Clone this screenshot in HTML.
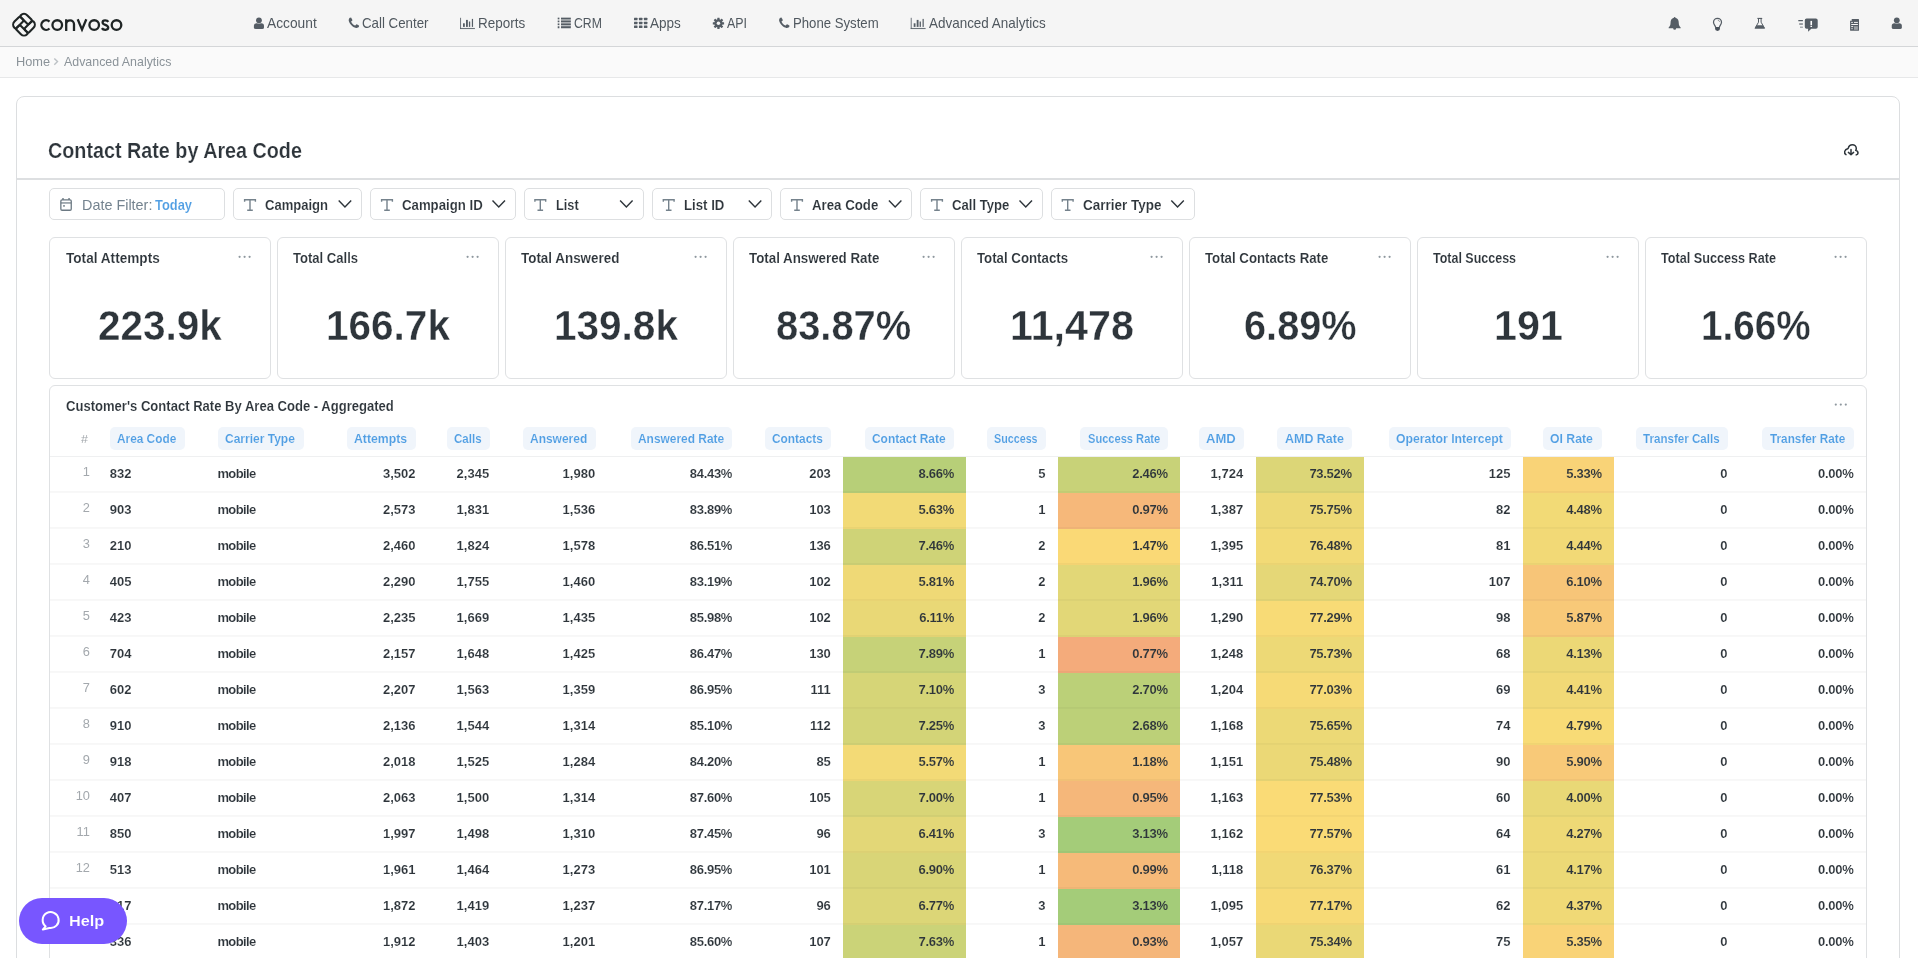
<!DOCTYPE html>
<html><head><meta charset="utf-8"><title>Advanced Analytics</title>
<style>
html,body{margin:0;padding:0;}
body{width:1918px;height:958px;overflow:hidden;background:#fff;font-family:"Liberation Sans",sans-serif;position:relative;}
#root{position:absolute;left:0;top:0;width:1918px;height:958px;overflow:hidden;will-change:transform;}
.t{position:absolute;white-space:pre;line-height:1;font-family:"Liberation Sans",sans-serif;transform-origin:0 0;}
.z{z-index:20}
#nav{position:absolute;left:0;top:0;width:1918px;height:46px;background:#f5f5f5;border-bottom:1px solid #d4d6d8;box-shadow:0 1px 2px rgba(0,0,0,0.08);}
#bc{position:absolute;left:0;top:47px;width:1918px;height:30px;background:#fafafa;border-bottom:1px solid #e7e8e9;}
#card{position:absolute;left:16px;top:96px;width:1882px;height:900px;border:1px solid #dcdee0;border-radius:8px;background:#fff;box-sizing:content-box;}
#hdrline{position:absolute;left:17px;top:178px;width:1882px;height:2px;background:#dddfe1;}
.fb{position:absolute;top:188px;height:30px;border:1px solid #dddfe1;border-radius:5px;background:#fff;box-sizing:content-box;}
.kc{position:absolute;top:237px;width:220px;height:140px;border:1px solid #dfe1e3;border-radius:6px;background:#fff;box-sizing:content-box;}
#tc{position:absolute;left:49px;top:385px;width:1816px;height:600px;border:1px solid #dfe1e3;border-radius:6px;background:#fff;box-sizing:content-box;}
.chip{position:absolute;top:427px;height:22.5px;border-radius:5px;background:#f0f5fb;}
.cc{position:absolute;height:36px;}
.rb{position:absolute;left:50px;width:1816px;height:1px;background:rgba(20,30,40,0.065);}
#help{position:absolute;left:19px;top:898px;width:108px;height:46px;border-radius:23px;background:#7856ff;z-index:10;}
svg{position:absolute;overflow:visible;}
</style></head><body><div id="root">
<div id="nav"></div><div id="bc"></div>
<div id="card"></div><div id="hdrline"></div>
<div id="tc"></div>
<div class="fb" style="left:49px;width:174px"></div><div class="fb" style="left:233px;width:127.30000000000001px"></div><div class="fb" style="left:370px;width:144px"></div><div class="fb" style="left:523.7px;width:118.79999999999995px"></div><div class="fb" style="left:652.3px;width:118.0px"></div><div class="fb" style="left:780.3px;width:129.70000000000005px"></div><div class="fb" style="left:920px;width:121px"></div><div class="fb" style="left:1051px;width:142px"></div><div class="kc" style="left:49px"></div><div class="kc" style="left:277px"></div><div class="kc" style="left:505px"></div><div class="kc" style="left:733px"></div><div class="kc" style="left:961px"></div><div class="kc" style="left:1189px"></div><div class="kc" style="left:1417px"></div><div class="kc" style="left:1645px"></div><div class="chip" style="left:109.8px;width:75.4px"></div><div class="chip" style="left:217.5px;width:86.50000000000003px"></div><div class="chip" style="left:346.5px;width:69.50000000000003px"></div><div class="chip" style="left:446.5px;width:43.20000000000001px"></div><div class="chip" style="left:522.5px;width:73.19999999999996px"></div><div class="chip" style="left:630.5px;width:101.9px"></div><div class="chip" style="left:764.8px;width:66.60000000000005px"></div><div class="chip" style="left:864.8px;width:89.4px"></div><div class="chip" style="left:986.5px;width:59.49999999999991px"></div><div class="chip" style="left:1079.5px;width:88.49999999999991px"></div><div class="chip" style="left:1198.5px;width:45.19999999999995px"></div><div class="chip" style="left:1276.5px;width:75.49999999999991px"></div><div class="chip" style="left:1388.8px;width:122.19999999999996px"></div><div class="chip" style="left:1542.8px;width:59.19999999999995px"></div><div class="chip" style="left:1635.5px;width:92.49999999999991px"></div><div class="chip" style="left:1762.1px;width:91.60000000000005px"></div>
<div class="cc" style="left:843px;top:457px;width:123px;background:rgb(183,207,120)"></div><div class="cc" style="left:1058px;top:457px;width:122px;background:rgb(200,210,120)"></div><div class="cc" style="left:1256px;top:457px;width:108px;background:rgb(220,214,119)"></div><div class="cc" style="left:1523px;top:457px;width:91px;background:rgb(249,211,119)"></div><div class="cc" style="left:843px;top:493px;width:123px;background:rgb(242,218,118)"></div><div class="cc" style="left:1058px;top:493px;width:122px;background:rgb(246,184,122)"></div><div class="cc" style="left:1256px;top:493px;width:108px;background:rgb(237,217,118)"></div><div class="cc" style="left:1523px;top:493px;width:91px;background:rgb(242,218,118)"></div><div class="cc" style="left:843px;top:529px;width:123px;background:rgb(207,211,119)"></div><div class="cc" style="left:1058px;top:529px;width:122px;background:rgb(250,217,118)"></div><div class="cc" style="left:1256px;top:529px;width:108px;background:rgb(242,218,118)"></div><div class="cc" style="left:1523px;top:529px;width:91px;background:rgb(242,217,118)"></div><div class="cc" style="left:843px;top:565px;width:123px;background:rgb(239,217,118)"></div><div class="cc" style="left:1058px;top:565px;width:122px;background:rgb(226,215,119)"></div><div class="cc" style="left:1256px;top:565px;width:108px;background:rgb(229,215,119)"></div><div class="cc" style="left:1523px;top:565px;width:91px;background:rgb(247,197,120)"></div><div class="cc" style="left:843px;top:601px;width:123px;background:rgb(233,216,118)"></div><div class="cc" style="left:1058px;top:601px;width:122px;background:rgb(226,215,119)"></div><div class="cc" style="left:1256px;top:601px;width:108px;background:rgb(248,219,118)"></div><div class="cc" style="left:1523px;top:601px;width:91px;background:rgb(248,201,120)"></div><div class="cc" style="left:843px;top:637px;width:123px;background:rgb(198,210,120)"></div><div class="cc" style="left:1058px;top:637px;width:122px;background:rgb(244,171,123)"></div><div class="cc" style="left:1256px;top:637px;width:108px;background:rgb(237,217,118)"></div><div class="cc" style="left:1523px;top:637px;width:91px;background:rgb(236,216,118)"></div><div class="cc" style="left:843px;top:673px;width:123px;background:rgb(214,213,119)"></div><div class="cc" style="left:1058px;top:673px;width:122px;background:rgb(187,208,120)"></div><div class="cc" style="left:1256px;top:673px;width:108px;background:rgb(246,218,118)"></div><div class="cc" style="left:1523px;top:673px;width:91px;background:rgb(241,217,118)"></div><div class="cc" style="left:843px;top:709px;width:123px;background:rgb(211,212,119)"></div><div class="cc" style="left:1058px;top:709px;width:122px;background:rgb(188,208,120)"></div><div class="cc" style="left:1256px;top:709px;width:108px;background:rgb(236,217,118)"></div><div class="cc" style="left:1523px;top:709px;width:91px;background:rgb(248,219,118)"></div><div class="cc" style="left:843px;top:745px;width:123px;background:rgb(243,218,118)"></div><div class="cc" style="left:1058px;top:745px;width:122px;background:rgb(248,198,120)"></div><div class="cc" style="left:1256px;top:745px;width:108px;background:rgb(235,216,118)"></div><div class="cc" style="left:1523px;top:745px;width:91px;background:rgb(248,201,120)"></div><div class="cc" style="left:843px;top:781px;width:123px;background:rgb(216,213,119)"></div><div class="cc" style="left:1058px;top:781px;width:122px;background:rgb(245,183,122)"></div><div class="cc" style="left:1256px;top:781px;width:108px;background:rgb(250,219,118)"></div><div class="cc" style="left:1523px;top:781px;width:91px;background:rgb(233,216,118)"></div><div class="cc" style="left:843px;top:817px;width:123px;background:rgb(227,215,119)"></div><div class="cc" style="left:1058px;top:817px;width:122px;background:rgb(164,204,121)"></div><div class="cc" style="left:1256px;top:817px;width:108px;background:rgb(250,219,118)"></div><div class="cc" style="left:1523px;top:817px;width:91px;background:rgb(238,217,118)"></div><div class="cc" style="left:843px;top:853px;width:123px;background:rgb(217,213,119)"></div><div class="cc" style="left:1058px;top:853px;width:122px;background:rgb(246,186,121)"></div><div class="cc" style="left:1256px;top:853px;width:108px;background:rgb(241,217,118)"></div><div class="cc" style="left:1523px;top:853px;width:91px;background:rgb(236,217,118)"></div><div class="cc" style="left:843px;top:889px;width:123px;background:rgb(220,214,119)"></div><div class="cc" style="left:1058px;top:889px;width:122px;background:rgb(164,204,121)"></div><div class="cc" style="left:1256px;top:889px;width:108px;background:rgb(247,218,118)"></div><div class="cc" style="left:1523px;top:889px;width:91px;background:rgb(240,217,118)"></div><div class="cc" style="left:843px;top:925px;width:123px;background:rgb(203,211,120)"></div><div class="cc" style="left:1058px;top:925px;width:122px;background:rgb(245,182,122)"></div><div class="cc" style="left:1256px;top:925px;width:108px;background:rgb(234,216,118)"></div><div class="cc" style="left:1523px;top:925px;width:91px;background:rgb(249,211,119)"></div>
<div class="rb" style="top:456px"></div><div class="rb" style="top:491px;opacity:.5"></div><div class="rb" style="top:492px;opacity:.45"></div><div class="rb" style="top:527px;opacity:.5"></div><div class="rb" style="top:528px;opacity:.45"></div><div class="rb" style="top:563px;opacity:.5"></div><div class="rb" style="top:564px;opacity:.45"></div><div class="rb" style="top:599px;opacity:.5"></div><div class="rb" style="top:600px;opacity:.45"></div><div class="rb" style="top:635px;opacity:.5"></div><div class="rb" style="top:636px;opacity:.45"></div><div class="rb" style="top:671px;opacity:.5"></div><div class="rb" style="top:672px;opacity:.45"></div><div class="rb" style="top:707px;opacity:.5"></div><div class="rb" style="top:708px;opacity:.45"></div><div class="rb" style="top:743px;opacity:.5"></div><div class="rb" style="top:744px;opacity:.45"></div><div class="rb" style="top:779px;opacity:.5"></div><div class="rb" style="top:780px;opacity:.45"></div><div class="rb" style="top:815px;opacity:.5"></div><div class="rb" style="top:816px;opacity:.45"></div><div class="rb" style="top:851px;opacity:.5"></div><div class="rb" style="top:852px;opacity:.45"></div><div class="rb" style="top:887px;opacity:.5"></div><div class="rb" style="top:888px;opacity:.45"></div><div class="rb" style="top:923px;opacity:.5"></div><div class="rb" style="top:924px;opacity:.45"></div><div class="rb" style="top:959px;opacity:.5"></div><div class="rb" style="top:960px;opacity:.45"></div>
<div id="help"></div>
<span class="t" style="top:15.93px;font-size:14.5px;font-weight:400;color:#50585f;transform:scaleX(0.9496);left:267.13px;">Account</span><span class="t" style="top:15.93px;font-size:14.5px;font-weight:400;color:#50585f;transform:scaleX(0.9171);left:361.90px;">Call Center</span><span class="t" style="top:15.93px;font-size:14.5px;font-weight:400;color:#50585f;transform:scaleX(0.9288);left:478.49px;">Reports</span><span class="t" style="top:15.93px;font-size:14.5px;font-weight:400;color:#50585f;transform:scaleX(0.8451);left:574.05px;">CRM</span><span class="t" style="top:15.93px;font-size:14.5px;font-weight:400;color:#50585f;transform:scaleX(0.9335);left:649.79px;">Apps</span><span class="t" style="top:15.93px;font-size:14.5px;font-weight:400;color:#50585f;transform:scaleX(0.8563);left:726.94px;">API</span><span class="t" style="top:15.93px;font-size:14.5px;font-weight:400;color:#50585f;transform:scaleX(0.9078);left:792.91px;">Phone System</span><span class="t" style="top:15.93px;font-size:14.5px;font-weight:400;color:#50585f;transform:scaleX(0.9274);left:928.79px;">Advanced Analytics</span><span class="t" style="top:54.57px;font-size:13.5px;font-weight:400;color:#8b9399;transform:scaleX(0.9467);left:15.67px;">Home</span><span class="t" style="top:54.57px;font-size:13.5px;font-weight:400;color:#8b9399;transform:scaleX(0.9177);left:64.44px;">Advanced Analytics</span><span class="t" style="top:139.58px;font-size:22px;font-weight:700;color:#2e353b;-webkit-text-stroke:0.20px #fff;transform:scaleX(0.8979);left:48.41px;">Contact Rate by Area Code</span><span class="t" style="top:198.24px;font-size:14.6px;font-weight:400;color:#74838f;transform:scaleX(0.9866);left:81.65px;">Date Filter:</span><span class="t" style="top:198.24px;font-size:14.6px;font-weight:700;color:#509ee3;-webkit-text-stroke:0.13px #fff;transform:scaleX(0.8834);left:154.62px;">Today</span><span class="t" style="top:198.24px;font-size:14.6px;font-weight:700;color:#2e353b;-webkit-text-stroke:0.13px #fff;transform:scaleX(0.8933);left:265.11px;">Campaign</span><span class="t" style="top:198.24px;font-size:14.6px;font-weight:700;color:#2e353b;-webkit-text-stroke:0.13px #fff;transform:scaleX(0.9049);left:401.71px;">Campaign ID</span><span class="t" style="top:198.24px;font-size:14.6px;font-weight:700;color:#2e353b;-webkit-text-stroke:0.13px #fff;transform:scaleX(0.8716);left:556.13px;">List</span><span class="t" style="top:198.24px;font-size:14.6px;font-weight:700;color:#2e353b;-webkit-text-stroke:0.13px #fff;transform:scaleX(0.9042);left:684.41px;">List ID</span><span class="t" style="top:198.24px;font-size:14.6px;font-weight:700;color:#2e353b;-webkit-text-stroke:0.13px #fff;transform:scaleX(0.9085);left:812.40px;">Area Code</span><span class="t" style="top:198.24px;font-size:14.6px;font-weight:700;color:#2e353b;-webkit-text-stroke:0.13px #fff;transform:scaleX(0.8983);left:952.11px;">Call Type</span><span class="t" style="top:198.24px;font-size:14.6px;font-weight:700;color:#2e353b;-webkit-text-stroke:0.13px #fff;transform:scaleX(0.9236);left:1082.69px;">Carrier Type</span><span class="t" style="top:250.10px;font-size:15px;font-weight:700;color:#2e353b;-webkit-text-stroke:0.13px #fff;transform:scaleX(0.9077);left:65.64px;">Total Attempts</span><span class="t" style="top:305.15px;font-size:42px;font-weight:700;color:#2e353b;-webkit-text-stroke:0.38px #fff;transform:scaleX(0.9640);left:98.08px;">223.9k</span><span class="t" style="top:250.10px;font-size:15px;font-weight:700;color:#2e353b;-webkit-text-stroke:0.13px #fff;transform:scaleX(0.8702);left:293.41px;">Total Calls</span><span class="t" style="top:305.15px;font-size:42px;font-weight:700;color:#2e353b;-webkit-text-stroke:0.38px #fff;transform:scaleX(0.9647);left:326.03px;">166.7k</span><span class="t" style="top:250.10px;font-size:15px;font-weight:700;color:#2e353b;-webkit-text-stroke:0.13px #fff;transform:scaleX(0.8938);left:521.10px;">Total Answered</span><span class="t" style="top:305.15px;font-size:42px;font-weight:700;color:#2e353b;-webkit-text-stroke:0.38px #fff;transform:scaleX(0.9647);left:554.03px;">139.8k</span><span class="t" style="top:250.10px;font-size:15px;font-weight:700;color:#2e353b;-webkit-text-stroke:0.13px #fff;transform:scaleX(0.8885);left:749.40px;">Total Answered Rate</span><span class="t" style="top:305.15px;font-size:42px;font-weight:700;color:#2e353b;-webkit-text-stroke:0.38px #fff;transform:scaleX(0.9494);left:776.38px;">83.87%</span><span class="t" style="top:250.10px;font-size:15px;font-weight:700;color:#2e353b;-webkit-text-stroke:0.13px #fff;transform:scaleX(0.8834);left:977.10px;">Total Contacts</span><span class="t" style="top:305.15px;font-size:42px;font-weight:700;color:#2e353b;-webkit-text-stroke:0.38px #fff;transform:scaleX(0.9824);left:1010.03px;">11,478</span><span class="t" style="top:250.10px;font-size:15px;font-weight:700;color:#2e353b;-webkit-text-stroke:0.13px #fff;transform:scaleX(0.8826);left:1205.10px;">Total Contacts Rate</span><span class="t" style="top:305.15px;font-size:42px;font-weight:700;color:#2e353b;-webkit-text-stroke:0.38px #fff;transform:scaleX(0.9458);left:1243.68px;">6.89%</span><span class="t" style="top:250.10px;font-size:15px;font-weight:700;color:#2e353b;-webkit-text-stroke:0.13px #fff;transform:scaleX(0.8325);left:1433.44px;">Total Success</span><span class="t" style="top:305.15px;font-size:42px;font-weight:700;color:#2e353b;-webkit-text-stroke:0.38px #fff;transform:scaleX(0.9838);left:1493.53px;">191</span><span class="t" style="top:250.10px;font-size:15px;font-weight:700;color:#2e353b;-webkit-text-stroke:0.13px #fff;transform:scaleX(0.8431);left:1661.13px;">Total Success Rate</span><span class="t" style="top:305.15px;font-size:42px;font-weight:700;color:#2e353b;-webkit-text-stroke:0.38px #fff;transform:scaleX(0.9206);left:1701.18px;">1.66%</span><span class="t" style="top:399.24px;font-size:14.6px;font-weight:700;color:#2e353b;-webkit-text-stroke:0.13px #fff;transform:scaleX(0.8945);left:65.91px;">Customer's Contact Rate By Area Code - Aggregated</span><span class="t" style="top:432.65px;font-size:12.7px;font-weight:700;color:#509ee3;-webkit-text-stroke:0.11px #f0f5fb;transform:scaleX(0.9334);left:117.22px;">Area Code</span><span class="t" style="top:432.65px;font-size:12.7px;font-weight:700;color:#509ee3;-webkit-text-stroke:0.11px #f0f5fb;transform:scaleX(0.9468);left:225.46px;">Carrier Type</span><span class="t" style="top:432.65px;font-size:12.7px;font-weight:700;color:#509ee3;-webkit-text-stroke:0.11px #f0f5fb;transform:scaleX(0.9673);left:354.15px;">Attempts</span><span class="t" style="top:432.65px;font-size:12.7px;font-weight:700;color:#509ee3;-webkit-text-stroke:0.11px #f0f5fb;transform:scaleX(0.9097);left:453.78px;">Calls</span><span class="t" style="top:432.65px;font-size:12.7px;font-weight:700;color:#509ee3;-webkit-text-stroke:0.11px #f0f5fb;transform:scaleX(0.9431);left:530.16px;">Answered</span><span class="t" style="top:432.65px;font-size:12.7px;font-weight:700;color:#509ee3;-webkit-text-stroke:0.11px #f0f5fb;transform:scaleX(0.9402);left:638.16px;">Answered Rate</span><span class="t" style="top:432.65px;font-size:12.7px;font-weight:700;color:#509ee3;-webkit-text-stroke:0.11px #f0f5fb;transform:scaleX(0.9375);left:772.16px;">Contacts</span><span class="t" style="top:432.65px;font-size:12.7px;font-weight:700;color:#509ee3;-webkit-text-stroke:0.11px #f0f5fb;transform:scaleX(0.9404);left:872.46px;">Contact Rate</span><span class="t" style="top:432.65px;font-size:12.7px;font-weight:700;color:#509ee3;-webkit-text-stroke:0.11px #f0f5fb;transform:scaleX(0.8464);left:993.82px;">Success</span><span class="t" style="top:432.65px;font-size:12.7px;font-weight:700;color:#509ee3;-webkit-text-stroke:0.11px #f0f5fb;transform:scaleX(0.8747);left:1087.50px;">Success Rate</span><span class="t" style="top:432.65px;font-size:12.7px;font-weight:700;color:#509ee3;-webkit-text-stroke:0.11px #f0f5fb;transform:scaleX(1.0306);left:1205.71px;">AMD</span><span class="t" style="top:432.65px;font-size:12.7px;font-weight:700;color:#509ee3;-webkit-text-stroke:0.11px #f0f5fb;transform:scaleX(0.9828);left:1284.74px;">AMD Rate</span><span class="t" style="top:432.65px;font-size:12.7px;font-weight:700;color:#509ee3;-webkit-text-stroke:0.11px #f0f5fb;transform:scaleX(0.9657);left:1396.45px;">Operator Intercept</span><span class="t" style="top:432.65px;font-size:12.7px;font-weight:700;color:#509ee3;-webkit-text-stroke:0.11px #f0f5fb;transform:scaleX(0.9655);left:1550.45px;">OI Rate</span><span class="t" style="top:432.65px;font-size:12.7px;font-weight:700;color:#509ee3;-webkit-text-stroke:0.11px #f0f5fb;transform:scaleX(0.9126);left:1643.48px;">Transfer Calls</span><span class="t" style="top:432.65px;font-size:12.7px;font-weight:700;color:#509ee3;-webkit-text-stroke:0.11px #f0f5fb;transform:scaleX(0.9272);left:1770.17px;">Transfer Rate</span><span class="t" style="top:433.97px;font-size:11.5px;font-weight:400;color:#a3a8ad;transform:scaleX(1.0841);left:81.34px;">#</span><span class="t" style="top:466.06px;font-size:12.8px;font-weight:400;color:#a3a8ad;left:82.79px;">1</span><span class="t" style="top:467.20px;font-size:13px;font-weight:700;color:#2e353b;-webkit-text-stroke:0.12px #fff;left:109.72px;">832</span><span class="t" style="top:467.20px;font-size:13px;font-weight:700;color:#2e353b;letter-spacing:-0.600px;-webkit-text-stroke:0.12px #fff;left:217.41px;">mobile</span><span class="t" style="top:467.20px;font-size:13px;font-weight:700;color:#2e353b;-webkit-text-stroke:0.12px #fff;left:382.92px;">3,502</span><span class="t" style="top:467.20px;font-size:13px;font-weight:700;color:#2e353b;-webkit-text-stroke:0.12px #fff;left:456.62px;">2,345</span><span class="t" style="top:467.20px;font-size:13px;font-weight:700;color:#2e353b;-webkit-text-stroke:0.12px #fff;left:562.62px;">1,980</span><span class="t" style="top:467.20px;font-size:13px;font-weight:700;color:#2e353b;letter-spacing:-0.300px;-webkit-text-stroke:0.12px #fff;left:689.83px;">84.43%</span><span class="t" style="top:467.20px;font-size:13px;font-weight:700;color:#2e353b;-webkit-text-stroke:0.12px #fff;left:809.17px;">203</span><span class="t" style="top:467.20px;font-size:13px;font-weight:700;color:#2e353b;letter-spacing:-0.300px;-webkit-text-stroke:0.12px rgb(183,207,120);left:918.55px;">8.66%</span><span class="t" style="top:467.20px;font-size:13px;font-weight:700;color:#2e353b;-webkit-text-stroke:0.12px #fff;left:1038.24px;">5</span><span class="t" style="top:467.20px;font-size:13px;font-weight:700;color:#2e353b;letter-spacing:-0.300px;-webkit-text-stroke:0.12px rgb(200,210,120);left:1132.35px;">2.46%</span><span class="t" style="top:467.20px;font-size:13px;font-weight:700;color:#2e353b;-webkit-text-stroke:0.12px #fff;left:1210.62px;">1,724</span><span class="t" style="top:467.20px;font-size:13px;font-weight:700;color:#2e353b;letter-spacing:-0.300px;-webkit-text-stroke:0.12px rgb(220,214,119);left:1309.43px;">73.52%</span><span class="t" style="top:467.20px;font-size:13px;font-weight:700;color:#2e353b;-webkit-text-stroke:0.12px #fff;left:1488.77px;">125</span><span class="t" style="top:467.20px;font-size:13px;font-weight:700;color:#2e353b;letter-spacing:-0.300px;-webkit-text-stroke:0.12px rgb(249,211,119);left:1566.35px;">5.33%</span><span class="t" style="top:467.20px;font-size:13px;font-weight:700;color:#2e353b;-webkit-text-stroke:0.12px #fff;left:1720.24px;">0</span><span class="t" style="top:467.20px;font-size:13px;font-weight:700;color:#2e353b;letter-spacing:-0.300px;-webkit-text-stroke:0.12px #fff;left:1818.05px;">0.00%</span><span class="t" style="top:502.06px;font-size:12.8px;font-weight:400;color:#a3a8ad;left:82.79px;">2</span><span class="t" style="top:503.20px;font-size:13px;font-weight:700;color:#2e353b;-webkit-text-stroke:0.12px #fff;left:109.72px;">903</span><span class="t" style="top:503.20px;font-size:13px;font-weight:700;color:#2e353b;letter-spacing:-0.600px;-webkit-text-stroke:0.12px #fff;left:217.41px;">mobile</span><span class="t" style="top:503.20px;font-size:13px;font-weight:700;color:#2e353b;-webkit-text-stroke:0.12px #fff;left:382.92px;">2,573</span><span class="t" style="top:503.20px;font-size:13px;font-weight:700;color:#2e353b;-webkit-text-stroke:0.12px #fff;left:456.62px;">1,831</span><span class="t" style="top:503.20px;font-size:13px;font-weight:700;color:#2e353b;-webkit-text-stroke:0.12px #fff;left:562.62px;">1,536</span><span class="t" style="top:503.20px;font-size:13px;font-weight:700;color:#2e353b;letter-spacing:-0.300px;-webkit-text-stroke:0.12px #fff;left:689.83px;">83.89%</span><span class="t" style="top:503.20px;font-size:13px;font-weight:700;color:#2e353b;-webkit-text-stroke:0.12px #fff;left:809.17px;">103</span><span class="t" style="top:503.20px;font-size:13px;font-weight:700;color:#2e353b;letter-spacing:-0.300px;-webkit-text-stroke:0.12px rgb(242,218,118);left:918.55px;">5.63%</span><span class="t" style="top:503.20px;font-size:13px;font-weight:700;color:#2e353b;-webkit-text-stroke:0.12px #fff;left:1038.24px;">1</span><span class="t" style="top:503.20px;font-size:13px;font-weight:700;color:#2e353b;letter-spacing:-0.300px;-webkit-text-stroke:0.12px rgb(246,184,122);left:1132.35px;">0.97%</span><span class="t" style="top:503.20px;font-size:13px;font-weight:700;color:#2e353b;-webkit-text-stroke:0.12px #fff;left:1210.62px;">1,387</span><span class="t" style="top:503.20px;font-size:13px;font-weight:700;color:#2e353b;letter-spacing:-0.300px;-webkit-text-stroke:0.12px rgb(237,217,118);left:1309.43px;">75.75%</span><span class="t" style="top:503.20px;font-size:13px;font-weight:700;color:#2e353b;-webkit-text-stroke:0.12px #fff;left:1496.00px;">82</span><span class="t" style="top:503.20px;font-size:13px;font-weight:700;color:#2e353b;letter-spacing:-0.300px;-webkit-text-stroke:0.12px rgb(242,218,118);left:1566.35px;">4.48%</span><span class="t" style="top:503.20px;font-size:13px;font-weight:700;color:#2e353b;-webkit-text-stroke:0.12px #fff;left:1720.24px;">0</span><span class="t" style="top:503.20px;font-size:13px;font-weight:700;color:#2e353b;letter-spacing:-0.300px;-webkit-text-stroke:0.12px #fff;left:1818.05px;">0.00%</span><span class="t" style="top:538.06px;font-size:12.8px;font-weight:400;color:#a3a8ad;left:82.79px;">3</span><span class="t" style="top:539.20px;font-size:13px;font-weight:700;color:#2e353b;-webkit-text-stroke:0.12px #fff;left:109.72px;">210</span><span class="t" style="top:539.20px;font-size:13px;font-weight:700;color:#2e353b;letter-spacing:-0.600px;-webkit-text-stroke:0.12px #fff;left:217.41px;">mobile</span><span class="t" style="top:539.20px;font-size:13px;font-weight:700;color:#2e353b;-webkit-text-stroke:0.12px #fff;left:382.92px;">2,460</span><span class="t" style="top:539.20px;font-size:13px;font-weight:700;color:#2e353b;-webkit-text-stroke:0.12px #fff;left:456.62px;">1,824</span><span class="t" style="top:539.20px;font-size:13px;font-weight:700;color:#2e353b;-webkit-text-stroke:0.12px #fff;left:562.62px;">1,578</span><span class="t" style="top:539.20px;font-size:13px;font-weight:700;color:#2e353b;letter-spacing:-0.300px;-webkit-text-stroke:0.12px #fff;left:689.83px;">86.51%</span><span class="t" style="top:539.20px;font-size:13px;font-weight:700;color:#2e353b;-webkit-text-stroke:0.12px #fff;left:809.17px;">136</span><span class="t" style="top:539.20px;font-size:13px;font-weight:700;color:#2e353b;letter-spacing:-0.300px;-webkit-text-stroke:0.12px rgb(207,211,119);left:918.55px;">7.46%</span><span class="t" style="top:539.20px;font-size:13px;font-weight:700;color:#2e353b;-webkit-text-stroke:0.12px #fff;left:1038.24px;">2</span><span class="t" style="top:539.20px;font-size:13px;font-weight:700;color:#2e353b;letter-spacing:-0.300px;-webkit-text-stroke:0.12px rgb(250,217,118);left:1132.35px;">1.47%</span><span class="t" style="top:539.20px;font-size:13px;font-weight:700;color:#2e353b;-webkit-text-stroke:0.12px #fff;left:1210.62px;">1,395</span><span class="t" style="top:539.20px;font-size:13px;font-weight:700;color:#2e353b;letter-spacing:-0.300px;-webkit-text-stroke:0.12px rgb(242,218,118);left:1309.43px;">76.48%</span><span class="t" style="top:539.20px;font-size:13px;font-weight:700;color:#2e353b;-webkit-text-stroke:0.12px #fff;left:1496.00px;">81</span><span class="t" style="top:539.20px;font-size:13px;font-weight:700;color:#2e353b;letter-spacing:-0.300px;-webkit-text-stroke:0.12px rgb(242,217,118);left:1566.35px;">4.44%</span><span class="t" style="top:539.20px;font-size:13px;font-weight:700;color:#2e353b;-webkit-text-stroke:0.12px #fff;left:1720.24px;">0</span><span class="t" style="top:539.20px;font-size:13px;font-weight:700;color:#2e353b;letter-spacing:-0.300px;-webkit-text-stroke:0.12px #fff;left:1818.05px;">0.00%</span><span class="t" style="top:574.06px;font-size:12.8px;font-weight:400;color:#a3a8ad;left:82.79px;">4</span><span class="t" style="top:575.20px;font-size:13px;font-weight:700;color:#2e353b;-webkit-text-stroke:0.12px #fff;left:109.72px;">405</span><span class="t" style="top:575.20px;font-size:13px;font-weight:700;color:#2e353b;letter-spacing:-0.600px;-webkit-text-stroke:0.12px #fff;left:217.41px;">mobile</span><span class="t" style="top:575.20px;font-size:13px;font-weight:700;color:#2e353b;-webkit-text-stroke:0.12px #fff;left:382.92px;">2,290</span><span class="t" style="top:575.20px;font-size:13px;font-weight:700;color:#2e353b;-webkit-text-stroke:0.12px #fff;left:456.62px;">1,755</span><span class="t" style="top:575.20px;font-size:13px;font-weight:700;color:#2e353b;-webkit-text-stroke:0.12px #fff;left:562.62px;">1,460</span><span class="t" style="top:575.20px;font-size:13px;font-weight:700;color:#2e353b;letter-spacing:-0.300px;-webkit-text-stroke:0.12px #fff;left:689.83px;">83.19%</span><span class="t" style="top:575.20px;font-size:13px;font-weight:700;color:#2e353b;-webkit-text-stroke:0.12px #fff;left:809.17px;">102</span><span class="t" style="top:575.20px;font-size:13px;font-weight:700;color:#2e353b;letter-spacing:-0.300px;-webkit-text-stroke:0.12px rgb(239,217,118);left:918.55px;">5.81%</span><span class="t" style="top:575.20px;font-size:13px;font-weight:700;color:#2e353b;-webkit-text-stroke:0.12px #fff;left:1038.24px;">2</span><span class="t" style="top:575.20px;font-size:13px;font-weight:700;color:#2e353b;letter-spacing:-0.300px;-webkit-text-stroke:0.12px rgb(226,215,119);left:1132.35px;">1.96%</span><span class="t" style="top:575.20px;font-size:13px;font-weight:700;color:#2e353b;-webkit-text-stroke:0.12px #fff;left:1211.34px;">1,311</span><span class="t" style="top:575.20px;font-size:13px;font-weight:700;color:#2e353b;letter-spacing:-0.300px;-webkit-text-stroke:0.12px rgb(229,215,119);left:1309.43px;">74.70%</span><span class="t" style="top:575.20px;font-size:13px;font-weight:700;color:#2e353b;-webkit-text-stroke:0.12px #fff;left:1488.77px;">107</span><span class="t" style="top:575.20px;font-size:13px;font-weight:700;color:#2e353b;letter-spacing:-0.300px;-webkit-text-stroke:0.12px rgb(247,197,120);left:1566.35px;">6.10%</span><span class="t" style="top:575.20px;font-size:13px;font-weight:700;color:#2e353b;-webkit-text-stroke:0.12px #fff;left:1720.24px;">0</span><span class="t" style="top:575.20px;font-size:13px;font-weight:700;color:#2e353b;letter-spacing:-0.300px;-webkit-text-stroke:0.12px #fff;left:1818.05px;">0.00%</span><span class="t" style="top:610.06px;font-size:12.8px;font-weight:400;color:#a3a8ad;left:82.79px;">5</span><span class="t" style="top:611.20px;font-size:13px;font-weight:700;color:#2e353b;-webkit-text-stroke:0.12px #fff;left:109.72px;">423</span><span class="t" style="top:611.20px;font-size:13px;font-weight:700;color:#2e353b;letter-spacing:-0.600px;-webkit-text-stroke:0.12px #fff;left:217.41px;">mobile</span><span class="t" style="top:611.20px;font-size:13px;font-weight:700;color:#2e353b;-webkit-text-stroke:0.12px #fff;left:382.92px;">2,235</span><span class="t" style="top:611.20px;font-size:13px;font-weight:700;color:#2e353b;-webkit-text-stroke:0.12px #fff;left:456.62px;">1,669</span><span class="t" style="top:611.20px;font-size:13px;font-weight:700;color:#2e353b;-webkit-text-stroke:0.12px #fff;left:562.62px;">1,435</span><span class="t" style="top:611.20px;font-size:13px;font-weight:700;color:#2e353b;letter-spacing:-0.300px;-webkit-text-stroke:0.12px #fff;left:689.83px;">85.98%</span><span class="t" style="top:611.20px;font-size:13px;font-weight:700;color:#2e353b;-webkit-text-stroke:0.12px #fff;left:809.17px;">102</span><span class="t" style="top:611.20px;font-size:13px;font-weight:700;color:#2e353b;letter-spacing:-0.300px;-webkit-text-stroke:0.12px rgb(233,216,118);left:919.26px;">6.11%</span><span class="t" style="top:611.20px;font-size:13px;font-weight:700;color:#2e353b;-webkit-text-stroke:0.12px #fff;left:1038.24px;">2</span><span class="t" style="top:611.20px;font-size:13px;font-weight:700;color:#2e353b;letter-spacing:-0.300px;-webkit-text-stroke:0.12px rgb(226,215,119);left:1132.35px;">1.96%</span><span class="t" style="top:611.20px;font-size:13px;font-weight:700;color:#2e353b;-webkit-text-stroke:0.12px #fff;left:1210.62px;">1,290</span><span class="t" style="top:611.20px;font-size:13px;font-weight:700;color:#2e353b;letter-spacing:-0.300px;-webkit-text-stroke:0.12px rgb(248,219,118);left:1309.43px;">77.29%</span><span class="t" style="top:611.20px;font-size:13px;font-weight:700;color:#2e353b;-webkit-text-stroke:0.12px #fff;left:1496.00px;">98</span><span class="t" style="top:611.20px;font-size:13px;font-weight:700;color:#2e353b;letter-spacing:-0.300px;-webkit-text-stroke:0.12px rgb(248,201,120);left:1566.35px;">5.87%</span><span class="t" style="top:611.20px;font-size:13px;font-weight:700;color:#2e353b;-webkit-text-stroke:0.12px #fff;left:1720.24px;">0</span><span class="t" style="top:611.20px;font-size:13px;font-weight:700;color:#2e353b;letter-spacing:-0.300px;-webkit-text-stroke:0.12px #fff;left:1818.05px;">0.00%</span><span class="t" style="top:646.06px;font-size:12.8px;font-weight:400;color:#a3a8ad;left:82.79px;">6</span><span class="t" style="top:647.20px;font-size:13px;font-weight:700;color:#2e353b;-webkit-text-stroke:0.12px #fff;left:109.72px;">704</span><span class="t" style="top:647.20px;font-size:13px;font-weight:700;color:#2e353b;letter-spacing:-0.600px;-webkit-text-stroke:0.12px #fff;left:217.41px;">mobile</span><span class="t" style="top:647.20px;font-size:13px;font-weight:700;color:#2e353b;-webkit-text-stroke:0.12px #fff;left:382.92px;">2,157</span><span class="t" style="top:647.20px;font-size:13px;font-weight:700;color:#2e353b;-webkit-text-stroke:0.12px #fff;left:456.62px;">1,648</span><span class="t" style="top:647.20px;font-size:13px;font-weight:700;color:#2e353b;-webkit-text-stroke:0.12px #fff;left:562.62px;">1,425</span><span class="t" style="top:647.20px;font-size:13px;font-weight:700;color:#2e353b;letter-spacing:-0.300px;-webkit-text-stroke:0.12px #fff;left:689.83px;">86.47%</span><span class="t" style="top:647.20px;font-size:13px;font-weight:700;color:#2e353b;-webkit-text-stroke:0.12px #fff;left:809.17px;">130</span><span class="t" style="top:647.20px;font-size:13px;font-weight:700;color:#2e353b;letter-spacing:-0.300px;-webkit-text-stroke:0.12px rgb(198,210,120);left:918.55px;">7.89%</span><span class="t" style="top:647.20px;font-size:13px;font-weight:700;color:#2e353b;-webkit-text-stroke:0.12px #fff;left:1038.24px;">1</span><span class="t" style="top:647.20px;font-size:13px;font-weight:700;color:#2e353b;letter-spacing:-0.300px;-webkit-text-stroke:0.12px rgb(244,171,123);left:1132.35px;">0.77%</span><span class="t" style="top:647.20px;font-size:13px;font-weight:700;color:#2e353b;-webkit-text-stroke:0.12px #fff;left:1210.62px;">1,248</span><span class="t" style="top:647.20px;font-size:13px;font-weight:700;color:#2e353b;letter-spacing:-0.300px;-webkit-text-stroke:0.12px rgb(237,217,118);left:1309.43px;">75.73%</span><span class="t" style="top:647.20px;font-size:13px;font-weight:700;color:#2e353b;-webkit-text-stroke:0.12px #fff;left:1496.00px;">68</span><span class="t" style="top:647.20px;font-size:13px;font-weight:700;color:#2e353b;letter-spacing:-0.300px;-webkit-text-stroke:0.12px rgb(236,216,118);left:1566.35px;">4.13%</span><span class="t" style="top:647.20px;font-size:13px;font-weight:700;color:#2e353b;-webkit-text-stroke:0.12px #fff;left:1720.24px;">0</span><span class="t" style="top:647.20px;font-size:13px;font-weight:700;color:#2e353b;letter-spacing:-0.300px;-webkit-text-stroke:0.12px #fff;left:1818.05px;">0.00%</span><span class="t" style="top:682.06px;font-size:12.8px;font-weight:400;color:#a3a8ad;left:82.79px;">7</span><span class="t" style="top:683.20px;font-size:13px;font-weight:700;color:#2e353b;-webkit-text-stroke:0.12px #fff;left:109.72px;">602</span><span class="t" style="top:683.20px;font-size:13px;font-weight:700;color:#2e353b;letter-spacing:-0.600px;-webkit-text-stroke:0.12px #fff;left:217.41px;">mobile</span><span class="t" style="top:683.20px;font-size:13px;font-weight:700;color:#2e353b;-webkit-text-stroke:0.12px #fff;left:382.92px;">2,207</span><span class="t" style="top:683.20px;font-size:13px;font-weight:700;color:#2e353b;-webkit-text-stroke:0.12px #fff;left:456.62px;">1,563</span><span class="t" style="top:683.20px;font-size:13px;font-weight:700;color:#2e353b;-webkit-text-stroke:0.12px #fff;left:562.62px;">1,359</span><span class="t" style="top:683.20px;font-size:13px;font-weight:700;color:#2e353b;letter-spacing:-0.300px;-webkit-text-stroke:0.12px #fff;left:689.83px;">86.95%</span><span class="t" style="top:683.20px;font-size:13px;font-weight:700;color:#2e353b;-webkit-text-stroke:0.12px #fff;left:810.60px;">111</span><span class="t" style="top:683.20px;font-size:13px;font-weight:700;color:#2e353b;letter-spacing:-0.300px;-webkit-text-stroke:0.12px rgb(214,213,119);left:918.55px;">7.10%</span><span class="t" style="top:683.20px;font-size:13px;font-weight:700;color:#2e353b;-webkit-text-stroke:0.12px #fff;left:1038.24px;">3</span><span class="t" style="top:683.20px;font-size:13px;font-weight:700;color:#2e353b;letter-spacing:-0.300px;-webkit-text-stroke:0.12px rgb(187,208,120);left:1132.35px;">2.70%</span><span class="t" style="top:683.20px;font-size:13px;font-weight:700;color:#2e353b;-webkit-text-stroke:0.12px #fff;left:1210.62px;">1,204</span><span class="t" style="top:683.20px;font-size:13px;font-weight:700;color:#2e353b;letter-spacing:-0.300px;-webkit-text-stroke:0.12px rgb(246,218,118);left:1309.43px;">77.03%</span><span class="t" style="top:683.20px;font-size:13px;font-weight:700;color:#2e353b;-webkit-text-stroke:0.12px #fff;left:1496.00px;">69</span><span class="t" style="top:683.20px;font-size:13px;font-weight:700;color:#2e353b;letter-spacing:-0.300px;-webkit-text-stroke:0.12px rgb(241,217,118);left:1566.35px;">4.41%</span><span class="t" style="top:683.20px;font-size:13px;font-weight:700;color:#2e353b;-webkit-text-stroke:0.12px #fff;left:1720.24px;">0</span><span class="t" style="top:683.20px;font-size:13px;font-weight:700;color:#2e353b;letter-spacing:-0.300px;-webkit-text-stroke:0.12px #fff;left:1818.05px;">0.00%</span><span class="t" style="top:718.06px;font-size:12.8px;font-weight:400;color:#a3a8ad;left:82.79px;">8</span><span class="t" style="top:719.20px;font-size:13px;font-weight:700;color:#2e353b;-webkit-text-stroke:0.12px #fff;left:109.72px;">910</span><span class="t" style="top:719.20px;font-size:13px;font-weight:700;color:#2e353b;letter-spacing:-0.600px;-webkit-text-stroke:0.12px #fff;left:217.41px;">mobile</span><span class="t" style="top:719.20px;font-size:13px;font-weight:700;color:#2e353b;-webkit-text-stroke:0.12px #fff;left:382.92px;">2,136</span><span class="t" style="top:719.20px;font-size:13px;font-weight:700;color:#2e353b;-webkit-text-stroke:0.12px #fff;left:456.62px;">1,544</span><span class="t" style="top:719.20px;font-size:13px;font-weight:700;color:#2e353b;-webkit-text-stroke:0.12px #fff;left:562.62px;">1,314</span><span class="t" style="top:719.20px;font-size:13px;font-weight:700;color:#2e353b;letter-spacing:-0.300px;-webkit-text-stroke:0.12px #fff;left:689.83px;">85.10%</span><span class="t" style="top:719.20px;font-size:13px;font-weight:700;color:#2e353b;-webkit-text-stroke:0.12px #fff;left:809.89px;">112</span><span class="t" style="top:719.20px;font-size:13px;font-weight:700;color:#2e353b;letter-spacing:-0.300px;-webkit-text-stroke:0.12px rgb(211,212,119);left:918.55px;">7.25%</span><span class="t" style="top:719.20px;font-size:13px;font-weight:700;color:#2e353b;-webkit-text-stroke:0.12px #fff;left:1038.24px;">3</span><span class="t" style="top:719.20px;font-size:13px;font-weight:700;color:#2e353b;letter-spacing:-0.300px;-webkit-text-stroke:0.12px rgb(188,208,120);left:1132.35px;">2.68%</span><span class="t" style="top:719.20px;font-size:13px;font-weight:700;color:#2e353b;-webkit-text-stroke:0.12px #fff;left:1210.62px;">1,168</span><span class="t" style="top:719.20px;font-size:13px;font-weight:700;color:#2e353b;letter-spacing:-0.300px;-webkit-text-stroke:0.12px rgb(236,217,118);left:1309.43px;">75.65%</span><span class="t" style="top:719.20px;font-size:13px;font-weight:700;color:#2e353b;-webkit-text-stroke:0.12px #fff;left:1496.00px;">74</span><span class="t" style="top:719.20px;font-size:13px;font-weight:700;color:#2e353b;letter-spacing:-0.300px;-webkit-text-stroke:0.12px rgb(248,219,118);left:1566.35px;">4.79%</span><span class="t" style="top:719.20px;font-size:13px;font-weight:700;color:#2e353b;-webkit-text-stroke:0.12px #fff;left:1720.24px;">0</span><span class="t" style="top:719.20px;font-size:13px;font-weight:700;color:#2e353b;letter-spacing:-0.300px;-webkit-text-stroke:0.12px #fff;left:1818.05px;">0.00%</span><span class="t" style="top:754.06px;font-size:12.8px;font-weight:400;color:#a3a8ad;left:82.79px;">9</span><span class="t" style="top:755.20px;font-size:13px;font-weight:700;color:#2e353b;-webkit-text-stroke:0.12px #fff;left:109.72px;">918</span><span class="t" style="top:755.20px;font-size:13px;font-weight:700;color:#2e353b;letter-spacing:-0.600px;-webkit-text-stroke:0.12px #fff;left:217.41px;">mobile</span><span class="t" style="top:755.20px;font-size:13px;font-weight:700;color:#2e353b;-webkit-text-stroke:0.12px #fff;left:382.92px;">2,018</span><span class="t" style="top:755.20px;font-size:13px;font-weight:700;color:#2e353b;-webkit-text-stroke:0.12px #fff;left:456.62px;">1,525</span><span class="t" style="top:755.20px;font-size:13px;font-weight:700;color:#2e353b;-webkit-text-stroke:0.12px #fff;left:562.62px;">1,284</span><span class="t" style="top:755.20px;font-size:13px;font-weight:700;color:#2e353b;letter-spacing:-0.300px;-webkit-text-stroke:0.12px #fff;left:689.83px;">84.20%</span><span class="t" style="top:755.20px;font-size:13px;font-weight:700;color:#2e353b;-webkit-text-stroke:0.12px #fff;left:816.40px;">85</span><span class="t" style="top:755.20px;font-size:13px;font-weight:700;color:#2e353b;letter-spacing:-0.300px;-webkit-text-stroke:0.12px rgb(243,218,118);left:918.55px;">5.57%</span><span class="t" style="top:755.20px;font-size:13px;font-weight:700;color:#2e353b;-webkit-text-stroke:0.12px #fff;left:1038.24px;">1</span><span class="t" style="top:755.20px;font-size:13px;font-weight:700;color:#2e353b;letter-spacing:-0.300px;-webkit-text-stroke:0.12px rgb(248,198,120);left:1132.35px;">1.18%</span><span class="t" style="top:755.20px;font-size:13px;font-weight:700;color:#2e353b;-webkit-text-stroke:0.12px #fff;left:1210.62px;">1,151</span><span class="t" style="top:755.20px;font-size:13px;font-weight:700;color:#2e353b;letter-spacing:-0.300px;-webkit-text-stroke:0.12px rgb(235,216,118);left:1309.43px;">75.48%</span><span class="t" style="top:755.20px;font-size:13px;font-weight:700;color:#2e353b;-webkit-text-stroke:0.12px #fff;left:1496.00px;">90</span><span class="t" style="top:755.20px;font-size:13px;font-weight:700;color:#2e353b;letter-spacing:-0.300px;-webkit-text-stroke:0.12px rgb(248,201,120);left:1566.35px;">5.90%</span><span class="t" style="top:755.20px;font-size:13px;font-weight:700;color:#2e353b;-webkit-text-stroke:0.12px #fff;left:1720.24px;">0</span><span class="t" style="top:755.20px;font-size:13px;font-weight:700;color:#2e353b;letter-spacing:-0.300px;-webkit-text-stroke:0.12px #fff;left:1818.05px;">0.00%</span><span class="t" style="top:790.06px;font-size:12.8px;font-weight:400;color:#a3a8ad;left:75.68px;">10</span><span class="t" style="top:791.20px;font-size:13px;font-weight:700;color:#2e353b;-webkit-text-stroke:0.12px #fff;left:109.72px;">407</span><span class="t" style="top:791.20px;font-size:13px;font-weight:700;color:#2e353b;letter-spacing:-0.600px;-webkit-text-stroke:0.12px #fff;left:217.41px;">mobile</span><span class="t" style="top:791.20px;font-size:13px;font-weight:700;color:#2e353b;-webkit-text-stroke:0.12px #fff;left:382.92px;">2,063</span><span class="t" style="top:791.20px;font-size:13px;font-weight:700;color:#2e353b;-webkit-text-stroke:0.12px #fff;left:456.62px;">1,500</span><span class="t" style="top:791.20px;font-size:13px;font-weight:700;color:#2e353b;-webkit-text-stroke:0.12px #fff;left:562.62px;">1,314</span><span class="t" style="top:791.20px;font-size:13px;font-weight:700;color:#2e353b;letter-spacing:-0.300px;-webkit-text-stroke:0.12px #fff;left:689.83px;">87.60%</span><span class="t" style="top:791.20px;font-size:13px;font-weight:700;color:#2e353b;-webkit-text-stroke:0.12px #fff;left:809.17px;">105</span><span class="t" style="top:791.20px;font-size:13px;font-weight:700;color:#2e353b;letter-spacing:-0.300px;-webkit-text-stroke:0.12px rgb(216,213,119);left:918.55px;">7.00%</span><span class="t" style="top:791.20px;font-size:13px;font-weight:700;color:#2e353b;-webkit-text-stroke:0.12px #fff;left:1038.24px;">1</span><span class="t" style="top:791.20px;font-size:13px;font-weight:700;color:#2e353b;letter-spacing:-0.300px;-webkit-text-stroke:0.12px rgb(245,183,122);left:1132.35px;">0.95%</span><span class="t" style="top:791.20px;font-size:13px;font-weight:700;color:#2e353b;-webkit-text-stroke:0.12px #fff;left:1210.62px;">1,163</span><span class="t" style="top:791.20px;font-size:13px;font-weight:700;color:#2e353b;letter-spacing:-0.300px;-webkit-text-stroke:0.12px rgb(250,219,118);left:1309.43px;">77.53%</span><span class="t" style="top:791.20px;font-size:13px;font-weight:700;color:#2e353b;-webkit-text-stroke:0.12px #fff;left:1496.00px;">60</span><span class="t" style="top:791.20px;font-size:13px;font-weight:700;color:#2e353b;letter-spacing:-0.300px;-webkit-text-stroke:0.12px rgb(233,216,118);left:1566.35px;">4.00%</span><span class="t" style="top:791.20px;font-size:13px;font-weight:700;color:#2e353b;-webkit-text-stroke:0.12px #fff;left:1720.24px;">0</span><span class="t" style="top:791.20px;font-size:13px;font-weight:700;color:#2e353b;letter-spacing:-0.300px;-webkit-text-stroke:0.12px #fff;left:1818.05px;">0.00%</span><span class="t" style="top:826.06px;font-size:12.8px;font-weight:400;color:#a3a8ad;left:76.62px;">11</span><span class="t" style="top:827.20px;font-size:13px;font-weight:700;color:#2e353b;-webkit-text-stroke:0.12px #fff;left:109.72px;">850</span><span class="t" style="top:827.20px;font-size:13px;font-weight:700;color:#2e353b;letter-spacing:-0.600px;-webkit-text-stroke:0.12px #fff;left:217.41px;">mobile</span><span class="t" style="top:827.20px;font-size:13px;font-weight:700;color:#2e353b;-webkit-text-stroke:0.12px #fff;left:382.92px;">1,997</span><span class="t" style="top:827.20px;font-size:13px;font-weight:700;color:#2e353b;-webkit-text-stroke:0.12px #fff;left:456.62px;">1,498</span><span class="t" style="top:827.20px;font-size:13px;font-weight:700;color:#2e353b;-webkit-text-stroke:0.12px #fff;left:562.62px;">1,310</span><span class="t" style="top:827.20px;font-size:13px;font-weight:700;color:#2e353b;letter-spacing:-0.300px;-webkit-text-stroke:0.12px #fff;left:689.83px;">87.45%</span><span class="t" style="top:827.20px;font-size:13px;font-weight:700;color:#2e353b;-webkit-text-stroke:0.12px #fff;left:816.40px;">96</span><span class="t" style="top:827.20px;font-size:13px;font-weight:700;color:#2e353b;letter-spacing:-0.300px;-webkit-text-stroke:0.12px rgb(227,215,119);left:918.55px;">6.41%</span><span class="t" style="top:827.20px;font-size:13px;font-weight:700;color:#2e353b;-webkit-text-stroke:0.12px #fff;left:1038.24px;">3</span><span class="t" style="top:827.20px;font-size:13px;font-weight:700;color:#2e353b;letter-spacing:-0.300px;-webkit-text-stroke:0.12px rgb(164,204,121);left:1132.35px;">3.13%</span><span class="t" style="top:827.20px;font-size:13px;font-weight:700;color:#2e353b;-webkit-text-stroke:0.12px #fff;left:1210.62px;">1,162</span><span class="t" style="top:827.20px;font-size:13px;font-weight:700;color:#2e353b;letter-spacing:-0.300px;-webkit-text-stroke:0.12px rgb(250,219,118);left:1309.43px;">77.57%</span><span class="t" style="top:827.20px;font-size:13px;font-weight:700;color:#2e353b;-webkit-text-stroke:0.12px #fff;left:1496.00px;">64</span><span class="t" style="top:827.20px;font-size:13px;font-weight:700;color:#2e353b;letter-spacing:-0.300px;-webkit-text-stroke:0.12px rgb(238,217,118);left:1566.35px;">4.27%</span><span class="t" style="top:827.20px;font-size:13px;font-weight:700;color:#2e353b;-webkit-text-stroke:0.12px #fff;left:1720.24px;">0</span><span class="t" style="top:827.20px;font-size:13px;font-weight:700;color:#2e353b;letter-spacing:-0.300px;-webkit-text-stroke:0.12px #fff;left:1818.05px;">0.00%</span><span class="t" style="top:862.06px;font-size:12.8px;font-weight:400;color:#a3a8ad;left:75.68px;">12</span><span class="t" style="top:863.20px;font-size:13px;font-weight:700;color:#2e353b;-webkit-text-stroke:0.12px #fff;left:109.72px;">513</span><span class="t" style="top:863.20px;font-size:13px;font-weight:700;color:#2e353b;letter-spacing:-0.600px;-webkit-text-stroke:0.12px #fff;left:217.41px;">mobile</span><span class="t" style="top:863.20px;font-size:13px;font-weight:700;color:#2e353b;-webkit-text-stroke:0.12px #fff;left:382.92px;">1,961</span><span class="t" style="top:863.20px;font-size:13px;font-weight:700;color:#2e353b;-webkit-text-stroke:0.12px #fff;left:456.62px;">1,464</span><span class="t" style="top:863.20px;font-size:13px;font-weight:700;color:#2e353b;-webkit-text-stroke:0.12px #fff;left:562.62px;">1,273</span><span class="t" style="top:863.20px;font-size:13px;font-weight:700;color:#2e353b;letter-spacing:-0.300px;-webkit-text-stroke:0.12px #fff;left:689.83px;">86.95%</span><span class="t" style="top:863.20px;font-size:13px;font-weight:700;color:#2e353b;-webkit-text-stroke:0.12px #fff;left:809.17px;">101</span><span class="t" style="top:863.20px;font-size:13px;font-weight:700;color:#2e353b;letter-spacing:-0.300px;-webkit-text-stroke:0.12px rgb(217,213,119);left:918.55px;">6.90%</span><span class="t" style="top:863.20px;font-size:13px;font-weight:700;color:#2e353b;-webkit-text-stroke:0.12px #fff;left:1038.24px;">1</span><span class="t" style="top:863.20px;font-size:13px;font-weight:700;color:#2e353b;letter-spacing:-0.300px;-webkit-text-stroke:0.12px rgb(246,186,121);left:1132.35px;">0.99%</span><span class="t" style="top:863.20px;font-size:13px;font-weight:700;color:#2e353b;-webkit-text-stroke:0.12px #fff;left:1211.34px;">1,118</span><span class="t" style="top:863.20px;font-size:13px;font-weight:700;color:#2e353b;letter-spacing:-0.300px;-webkit-text-stroke:0.12px rgb(241,217,118);left:1309.43px;">76.37%</span><span class="t" style="top:863.20px;font-size:13px;font-weight:700;color:#2e353b;-webkit-text-stroke:0.12px #fff;left:1496.00px;">61</span><span class="t" style="top:863.20px;font-size:13px;font-weight:700;color:#2e353b;letter-spacing:-0.300px;-webkit-text-stroke:0.12px rgb(236,217,118);left:1566.35px;">4.17%</span><span class="t" style="top:863.20px;font-size:13px;font-weight:700;color:#2e353b;-webkit-text-stroke:0.12px #fff;left:1720.24px;">0</span><span class="t" style="top:863.20px;font-size:13px;font-weight:700;color:#2e353b;letter-spacing:-0.300px;-webkit-text-stroke:0.12px #fff;left:1818.05px;">0.00%</span><span class="t" style="top:898.06px;font-size:12.8px;font-weight:400;color:#a3a8ad;left:75.68px;">13</span><span class="t" style="top:899.20px;font-size:13px;font-weight:700;color:#2e353b;-webkit-text-stroke:0.12px #fff;left:109.72px;">817</span><span class="t" style="top:899.20px;font-size:13px;font-weight:700;color:#2e353b;letter-spacing:-0.600px;-webkit-text-stroke:0.12px #fff;left:217.41px;">mobile</span><span class="t" style="top:899.20px;font-size:13px;font-weight:700;color:#2e353b;-webkit-text-stroke:0.12px #fff;left:382.92px;">1,872</span><span class="t" style="top:899.20px;font-size:13px;font-weight:700;color:#2e353b;-webkit-text-stroke:0.12px #fff;left:456.62px;">1,419</span><span class="t" style="top:899.20px;font-size:13px;font-weight:700;color:#2e353b;-webkit-text-stroke:0.12px #fff;left:562.62px;">1,237</span><span class="t" style="top:899.20px;font-size:13px;font-weight:700;color:#2e353b;letter-spacing:-0.300px;-webkit-text-stroke:0.12px #fff;left:689.83px;">87.17%</span><span class="t" style="top:899.20px;font-size:13px;font-weight:700;color:#2e353b;-webkit-text-stroke:0.12px #fff;left:816.40px;">96</span><span class="t" style="top:899.20px;font-size:13px;font-weight:700;color:#2e353b;letter-spacing:-0.300px;-webkit-text-stroke:0.12px rgb(220,214,119);left:918.55px;">6.77%</span><span class="t" style="top:899.20px;font-size:13px;font-weight:700;color:#2e353b;-webkit-text-stroke:0.12px #fff;left:1038.24px;">3</span><span class="t" style="top:899.20px;font-size:13px;font-weight:700;color:#2e353b;letter-spacing:-0.300px;-webkit-text-stroke:0.12px rgb(164,204,121);left:1132.35px;">3.13%</span><span class="t" style="top:899.20px;font-size:13px;font-weight:700;color:#2e353b;-webkit-text-stroke:0.12px #fff;left:1210.62px;">1,095</span><span class="t" style="top:899.20px;font-size:13px;font-weight:700;color:#2e353b;letter-spacing:-0.300px;-webkit-text-stroke:0.12px rgb(247,218,118);left:1309.43px;">77.17%</span><span class="t" style="top:899.20px;font-size:13px;font-weight:700;color:#2e353b;-webkit-text-stroke:0.12px #fff;left:1496.00px;">62</span><span class="t" style="top:899.20px;font-size:13px;font-weight:700;color:#2e353b;letter-spacing:-0.300px;-webkit-text-stroke:0.12px rgb(240,217,118);left:1566.35px;">4.37%</span><span class="t" style="top:899.20px;font-size:13px;font-weight:700;color:#2e353b;-webkit-text-stroke:0.12px #fff;left:1720.24px;">0</span><span class="t" style="top:899.20px;font-size:13px;font-weight:700;color:#2e353b;letter-spacing:-0.300px;-webkit-text-stroke:0.12px #fff;left:1818.05px;">0.00%</span><span class="t" style="top:934.06px;font-size:12.8px;font-weight:400;color:#a3a8ad;left:75.68px;">14</span><span class="t" style="top:935.20px;font-size:13px;font-weight:700;color:#2e353b;-webkit-text-stroke:0.12px #fff;left:109.72px;">336</span><span class="t" style="top:935.20px;font-size:13px;font-weight:700;color:#2e353b;letter-spacing:-0.600px;-webkit-text-stroke:0.12px #fff;left:217.41px;">mobile</span><span class="t" style="top:935.20px;font-size:13px;font-weight:700;color:#2e353b;-webkit-text-stroke:0.12px #fff;left:382.92px;">1,912</span><span class="t" style="top:935.20px;font-size:13px;font-weight:700;color:#2e353b;-webkit-text-stroke:0.12px #fff;left:456.62px;">1,403</span><span class="t" style="top:935.20px;font-size:13px;font-weight:700;color:#2e353b;-webkit-text-stroke:0.12px #fff;left:562.62px;">1,201</span><span class="t" style="top:935.20px;font-size:13px;font-weight:700;color:#2e353b;letter-spacing:-0.300px;-webkit-text-stroke:0.12px #fff;left:689.83px;">85.60%</span><span class="t" style="top:935.20px;font-size:13px;font-weight:700;color:#2e353b;-webkit-text-stroke:0.12px #fff;left:809.17px;">107</span><span class="t" style="top:935.20px;font-size:13px;font-weight:700;color:#2e353b;letter-spacing:-0.300px;-webkit-text-stroke:0.12px rgb(203,211,120);left:918.55px;">7.63%</span><span class="t" style="top:935.20px;font-size:13px;font-weight:700;color:#2e353b;-webkit-text-stroke:0.12px #fff;left:1038.24px;">1</span><span class="t" style="top:935.20px;font-size:13px;font-weight:700;color:#2e353b;letter-spacing:-0.300px;-webkit-text-stroke:0.12px rgb(245,182,122);left:1132.35px;">0.93%</span><span class="t" style="top:935.20px;font-size:13px;font-weight:700;color:#2e353b;-webkit-text-stroke:0.12px #fff;left:1210.62px;">1,057</span><span class="t" style="top:935.20px;font-size:13px;font-weight:700;color:#2e353b;letter-spacing:-0.300px;-webkit-text-stroke:0.12px rgb(234,216,118);left:1309.43px;">75.34%</span><span class="t" style="top:935.20px;font-size:13px;font-weight:700;color:#2e353b;-webkit-text-stroke:0.12px #fff;left:1496.00px;">75</span><span class="t" style="top:935.20px;font-size:13px;font-weight:700;color:#2e353b;letter-spacing:-0.300px;-webkit-text-stroke:0.12px rgb(249,211,119);left:1566.35px;">5.35%</span><span class="t" style="top:935.20px;font-size:13px;font-weight:700;color:#2e353b;-webkit-text-stroke:0.12px #fff;left:1720.24px;">0</span><span class="t" style="top:935.20px;font-size:13px;font-weight:700;color:#2e353b;letter-spacing:-0.300px;-webkit-text-stroke:0.12px #fff;left:1818.05px;">0.00%</span><span class="t z" style="top:913.08px;font-size:15.5px;font-weight:700;color:#ffffff;-webkit-text-stroke:0.14px #7856ff;transform:scaleX(1.0507);left:68.87px;">Help</span>
<svg width="1918" height="958" viewBox="0 0 1918 958" style="left:0;top:0;z-index:5">
<g transform="translate(24 24.7) rotate(45)" fill="none" stroke="#1f2525" stroke-width="2.1" stroke-linejoin="round"><path transform="rotate(0)" d="M-4.549999999999999 -8.95 H1.3 Q3.0 -8.95 3.0 -7.249999999999999 V-4.7 Q3.0 -3.0 1.3 -3.0 H-7.249999999999999 Q-8.95 -3.0 -8.95 -4.7 V-4.549999999999999 A4.4 4.4 0 0 1 -4.549999999999999 -8.95Z"/><path transform="rotate(90)" d="M-4.549999999999999 -8.95 H1.3 Q3.0 -8.95 3.0 -7.249999999999999 V-4.7 Q3.0 -3.0 1.3 -3.0 H-7.249999999999999 Q-8.95 -3.0 -8.95 -4.7 V-4.549999999999999 A4.4 4.4 0 0 1 -4.549999999999999 -8.95Z"/><path transform="rotate(180)" d="M-4.549999999999999 -8.95 H1.3 Q3.0 -8.95 3.0 -7.249999999999999 V-4.7 Q3.0 -3.0 1.3 -3.0 H-7.249999999999999 Q-8.95 -3.0 -8.95 -4.7 V-4.549999999999999 A4.4 4.4 0 0 1 -4.549999999999999 -8.95Z"/><path transform="rotate(270)" d="M-4.549999999999999 -8.95 H1.3 Q3.0 -8.95 3.0 -7.249999999999999 V-4.7 Q3.0 -3.0 1.3 -3.0 H-7.249999999999999 Q-8.95 -3.0 -8.95 -4.7 V-4.549999999999999 A4.4 4.4 0 0 1 -4.549999999999999 -8.95Z"/></g>
<g fill="none" stroke="#1f2525" stroke-width="2.3"><path d="M49.5 21.6 A4.8 4.8 0 1 0 49.5 28.5"/><circle cx="57.25" cy="25.05" r="4.8"/><path d="M66.2 30.9 V19.3 M66.2 24.2 A3.9 3.9 0 0 1 74 24.2 V30.9"/><path d="M77.7 19.3 L82 29.6 L86.3 19.3" stroke-linejoin="miter"/><circle cx="94.2" cy="25.05" r="4.8"/><path d="M108.3 21.9 C107.2 19.9 102.6 19.7 102.6 22.4 C102.6 25.3 108.2 24.5 108.2 27.6 C108.2 30.5 103.2 30.4 101.9 28.2"/><circle cx="116.5" cy="25.05" r="4.8"/></g>
<path fill="#555d65" d="M253.89999999999998 27.4 V25.8 Q253.89999999999998 23.2 256.5 23.2 H261.4 Q264.0 23.2 264.0 25.8 V27.4 Q264.0 29.0 262.2 29.0 H255.7 Q253.89999999999998 29.0 253.89999999999998 27.4Z"/><circle cx="258.95" cy="20.3" r="3.25" fill="#f5f5f5"/><circle cx="258.95" cy="20.3" r="2.9" fill="#555d65"/>
<path fill="#555d65" d="M1891.75 27.45 V25.85 Q1891.75 23.25 1894.35 23.25 H1899.25 Q1901.85 23.25 1901.85 25.85 V27.45 Q1901.85 29.05 1900.05 29.05 H1893.55 Q1891.75 29.05 1891.75 27.45Z"/><circle cx="1896.8" cy="20.35" r="3.25" fill="#f5f5f5"/><circle cx="1896.8" cy="20.35" r="2.9" fill="#555d65"/>
<path fill="#555d65" transform="translate(348.7 17.6) scale(0.007386363636363636 -0.007386363636363636) translate(0 -2224)" d="M1408 1112q0 -27 -10 -70.5t-21 -68.5q-21 -50 -122 -106q-94 -51 -186 -51q-27 0 -53 3.5t-57.5 12.5t-47 14.5t-55.5 20.5t-49 18q-98 35 -175 83q-127 79 -264 216t-216 264q-48 77 -83 175q-3 9 -18 49t-20.5 55.5t-14.5 47t-12.5 57.5t-3.5 53q0 92 51 186q56 101 106 122q25 11 68.5 21t70.5 10q14 0 21 -3q18 -6 53 -76q11 -19 30 -54t35 -63.5t31 -53.5q3 -4 17.5 -25t21.5 -35.5t7 -28.5q0 -20 -28.5 -50t-62 -55t-62 -53t-28.5 -46q0 -9 5 -22.5t8.5 -20.5t14 -24t11.5 -19q76 -137 174 -235t235 -174q2 -1 19 -11.5t24 -14t20.5 -8.5t22.5 -5q18 0 46 28.5t53 62t55 62t50 28.5q14 0 28.5 -7t35.5 -21.5t25 -17.5q25 -15 53.5 -31t63.5 -35t54 -30q70 -35 76 -53q3 -7 3 -21z"/>
<path fill="#555d65" transform="translate(779.1 17.6) scale(0.007386363636363636 -0.007386363636363636) translate(0 -2224)" d="M1408 1112q0 -27 -10 -70.5t-21 -68.5q-21 -50 -122 -106q-94 -51 -186 -51q-27 0 -53 3.5t-57.5 12.5t-47 14.5t-55.5 20.5t-49 18q-98 35 -175 83q-127 79 -264 216t-216 264q-48 77 -83 175q-3 9 -18 49t-20.5 55.5t-14.5 47t-12.5 57.5t-3.5 53q0 92 51 186q56 101 106 122q25 11 68.5 21t70.5 10q14 0 21 -3q18 -6 53 -76q11 -19 30 -54t35 -63.5t31 -53.5q3 -4 17.5 -25t21.5 -35.5t7 -28.5q0 -20 -28.5 -50t-62 -55t-62 -53t-28.5 -46q0 -9 5 -22.5t8.5 -20.5t14 -24t11.5 -19q76 -137 174 -235t235 -174q2 -1 19 -11.5t24 -14t20.5 -8.5t22.5 -5q18 0 46 28.5t53 62t55 62t50 28.5q14 0 28.5 -7t35.5 -21.5t25 -17.5q25 -15 53.5 -31t63.5 -35t54 -30q70 -35 76 -53q3 -7 3 -21z"/>
<g fill="#555d65"><rect x="460.0" y="17.8" width="1.05" height="11.2" opacity=".8"/><rect x="460.0" y="27.95" width="14.9" height="1.1" opacity=".85"/><rect x="463.0" y="23.3" width="1.8" height="3.6"/><rect x="466.0" y="19.9" width="1.85" height="7"/><rect x="468.9" y="21.5" width="1.3" height="5.4"/><rect x="471.85" y="18.9" width="1.2" height="8"/></g>
<g fill="#555d65"><rect x="910.7" y="17.8" width="1.05" height="11.2" opacity=".8"/><rect x="910.7" y="27.95" width="14.9" height="1.1" opacity=".85"/><rect x="913.7" y="23.3" width="1.8" height="3.6"/><rect x="916.7" y="19.9" width="1.85" height="7"/><rect x="919.6" y="21.5" width="1.3" height="5.4"/><rect x="922.5500000000001" y="18.9" width="1.2" height="8"/></g>
<g fill="#555d65"><rect x="557.7" y="17.65" width="1.7" height="1.7"/><rect x="561" y="17.65" width="9.8" height="1.7"/><rect x="557.7" y="20.549999999999997" width="1.7" height="1.7"/><rect x="561" y="20.549999999999997" width="9.8" height="1.7"/><rect x="557.7" y="23.45" width="1.7" height="1.7"/><rect x="561" y="23.45" width="9.8" height="1.7"/><rect x="557.7" y="26.25" width="1.7" height="2.0"/><rect x="561" y="26.25" width="9.8" height="2.0"/><rect x="561" y="18.5" width="9.8" height="8.7" opacity=".28"/></g>
<g fill="#555d65"><rect x="634.0" y="17.85" width="3.5" height="2.45" rx=".5"/><rect x="638.95" y="17.85" width="3.5" height="2.45" rx=".5"/><rect x="643.9" y="17.85" width="3.5" height="2.45" rx=".5"/><rect x="634.0" y="21.7" width="3.5" height="2.45" rx=".5"/><rect x="638.95" y="21.7" width="3.5" height="2.45" rx=".5"/><rect x="643.9" y="21.7" width="3.5" height="2.45" rx=".5"/><rect x="634.0" y="25.45" width="3.5" height="2.45" rx=".5"/><rect x="638.95" y="25.45" width="3.5" height="2.45" rx=".5"/><rect x="643.9" y="25.45" width="3.5" height="2.45" rx=".5"/></g>
<g fill="#555d65"><circle cx="718.45" cy="23.35" r="4.15"/><rect x="717.3000000000001" y="17.700000000000003" width="2.3" height="2.6" rx=".3" transform="rotate(0 718.45 23.35)"/><rect x="717.3000000000001" y="17.700000000000003" width="2.3" height="2.6" rx=".3" transform="rotate(45 718.45 23.35)"/><rect x="717.3000000000001" y="17.700000000000003" width="2.3" height="2.6" rx=".3" transform="rotate(90 718.45 23.35)"/><rect x="717.3000000000001" y="17.700000000000003" width="2.3" height="2.6" rx=".3" transform="rotate(135 718.45 23.35)"/><rect x="717.3000000000001" y="17.700000000000003" width="2.3" height="2.6" rx=".3" transform="rotate(180 718.45 23.35)"/><rect x="717.3000000000001" y="17.700000000000003" width="2.3" height="2.6" rx=".3" transform="rotate(225 718.45 23.35)"/><rect x="717.3000000000001" y="17.700000000000003" width="2.3" height="2.6" rx=".3" transform="rotate(270 718.45 23.35)"/><rect x="717.3000000000001" y="17.700000000000003" width="2.3" height="2.6" rx=".3" transform="rotate(315 718.45 23.35)"/><circle cx="718.45" cy="23.35" r="1.75" fill="#f5f5f5"/></g>
<path fill="#555d65" d="M1674.65 16.9 q.8 0 .8 .9 c2.4 .5 3.3 2.6 3.3 4.9 c0 2.2 .6 3.6 1.9 4.7 v.8 h-12 v-.8 c1.3 -1.1 1.9 -2.5 1.9 -4.7 c0 -2.3 .9 -4.4 3.3 -4.9 q0 -.9 .8 -.9z M1673.15 28.2 h3 a1.5 1.6 0 0 1 -3 0z"/>
<path fill="none" stroke="#555d65" stroke-width="1.25" d="M1715.6 27.2 c0 -1.4 -2.1 -2.7 -2.1 -4.9 a4 4 0 0 1 8 0 c0 2.2 -2.1 3.5 -2.1 4.9"/><path fill="#49515a" d="M1715.1 27 h4.8 v2 q0 1.8 -2.4 1.9 q-2.4 -.1 -2.4 -1.9z"/><path fill="none" stroke="#555d65" stroke-width=".6" d="M1717.7 20 a2.2 2.2 0 0 1 1.9 1.9"/>
<g fill="none" stroke="#555d65"><path stroke-width="1.15" d="M1757.3999999999999 18.45 h4.8"/><path stroke-width="1" d="M1758.5 19 v3.2 l-3.4 5.9 M1761.1 19 v3.2 l3.4 5.9"/></g><path fill="#555d65" d="M1756.7 25.2 h6.2 l2 3.3 q.1 .3 -.3 .3 h-9.6 q-.4 0 -.3 -.3z"/>
<path fill="#555d65" d="M1806.6 18.5 h9.3 q1.8 0 1.8 1.8 v6.7 q0 1.8 -1.8 1.8 h-4.6 l-3.2 2.9 v-2.9 h-1.5 q-1.8 0 -1.8 -1.8 v-6.7 q0 -1.8 1.8 -1.8z"/><rect x="1810.45" y="20.9" width="1.6" height="4.1" fill="#fff"/><rect x="1810.45" y="25.7" width="1.6" height="1.3" fill="#fff"/><g fill="#555d65"><rect x="1798.3" y="20" width="4.6" height="1.25"/><rect x="1799.2" y="23.4" width="3.7" height="1.25" opacity=".9"/><rect x="1800" y="26.6" width="2.9" height="1.2" opacity=".6"/></g>
<path fill="#555d65" d="M1851.7 19 h6.7 q.6 0 .6 .6 v10.6 q0 .6 -.6 .6 h-7.7 q-.6 0 -.6 -.6 v-9.4 h1.6z"/><g fill="#f5f5f5"><rect x="1851.2" y="21.9" width="1.6" height="1"/><rect x="1854" y="21.9" width="3.9" height="1"/><rect x="1851.2" y="24" width="6.7" height="1"/><rect x="1851.2" y="26.1" width="2" height="1"/><rect x="1851.2" y="28.2" width="1.6" height="1" opacity=".8"/><rect x="1854" y="26.2" width="3.9" height="3.6" opacity=".45"/></g>
<g fill="none" stroke="#2e353b" stroke-width="1.5" stroke-linecap="round" stroke-linejoin="round"><path d="M1846 154.6 C1843.8 153.2 1844 149.4 1848.2 148.4 C1848.8 145.9 1850.8 144.8 1852.4 144.8 C1854.6 144.8 1856.3 146.5 1856.3 148.5 C1856.3 149.3 1856.1 149.8 1855.7 150.4 C1857.3 150.9 1858.1 152 1858 153.1 C1857.9 154 1857.2 154.6 1856.2 154.9"/><path d="M1851 149.6 V154.4 M1848.4 152.4 L1851 154.7 L1853.6 152.4"/></g>
<g fill="none" stroke="#6c7983" stroke-width="1.3"><rect x="60.85" y="199.85" width="10.4" height="10.4" rx="1.2"/><path d="M60.85 202.95 H71.25" stroke-width="1.2"/><path d="M63 198 V200 M69.05 198 V200" stroke-width="1.4"/></g><rect x="63.2" y="205.1" width="1.6" height="1.6" fill="#6c7983"/>
<path fill="none" stroke="#75828c" stroke-width="1.4" d="M244.6 201.7 V199.75 H255.4 V201.7 M250 199.75 V210.2 M247.2 210.2 H252.8"/>
<path fill="none" stroke="#75828c" stroke-width="1.4" d="M381.6 201.7 V199.75 H392.4 V201.7 M387 199.75 V210.2 M384.2 210.2 H389.8"/>
<path fill="none" stroke="#75828c" stroke-width="1.4" d="M534.9 201.7 V199.75 H545.6999999999999 V201.7 M540.3 199.75 V210.2 M537.5 210.2 H543.0999999999999"/>
<path fill="none" stroke="#75828c" stroke-width="1.4" d="M663.3000000000001 201.7 V199.75 H674.1 V201.7 M668.7 199.75 V210.2 M665.9000000000001 210.2 H671.5"/>
<path fill="none" stroke="#75828c" stroke-width="1.4" d="M791.6 201.7 V199.75 H802.4 V201.7 M797 199.75 V210.2 M794.2 210.2 H799.8"/>
<path fill="none" stroke="#75828c" stroke-width="1.4" d="M931.6 201.7 V199.75 H942.4 V201.7 M937 199.75 V210.2 M934.2 210.2 H939.8"/>
<path fill="none" stroke="#75828c" stroke-width="1.4" d="M1062.3 201.7 V199.75 H1073.1000000000001 V201.7 M1067.7 199.75 V210.2 M1064.9 210.2 H1070.5"/>
<path fill="none" stroke="#2e353b" stroke-width="1.45" d="M338.7 200.6 L344.95 206.9 L351.2 200.6"/>
<path fill="none" stroke="#2e353b" stroke-width="1.45" d="M492.5 200.6 L498.75 206.9 L505 200.6"/>
<path fill="none" stroke="#2e353b" stroke-width="1.45" d="M620.1 200.6 L626.35 206.9 L632.6 200.6"/>
<path fill="none" stroke="#2e353b" stroke-width="1.45" d="M748.8 200.6 L755.05 206.9 L761.3 200.6"/>
<path fill="none" stroke="#2e353b" stroke-width="1.45" d="M888.9 200.6 L895.15 206.9 L901.4 200.6"/>
<path fill="none" stroke="#2e353b" stroke-width="1.45" d="M1019.5 200.6 L1025.75 206.9 L1032 200.6"/>
<path fill="none" stroke="#2e353b" stroke-width="1.45" d="M1171.3 200.6 L1177.55 206.9 L1183.8 200.6"/>
<g fill="#8f989f"><circle cx="239.6" cy="256.8" r="1.1"/><circle cx="244.6" cy="256.8" r="1.1"/><circle cx="249.6" cy="256.8" r="1.1"/></g>
<g fill="#8f989f"><circle cx="467.6" cy="256.8" r="1.1"/><circle cx="472.6" cy="256.8" r="1.1"/><circle cx="477.6" cy="256.8" r="1.1"/></g>
<g fill="#8f989f"><circle cx="695.6" cy="256.8" r="1.1"/><circle cx="700.6" cy="256.8" r="1.1"/><circle cx="705.6" cy="256.8" r="1.1"/></g>
<g fill="#8f989f"><circle cx="923.6" cy="256.8" r="1.1"/><circle cx="928.6" cy="256.8" r="1.1"/><circle cx="933.6" cy="256.8" r="1.1"/></g>
<g fill="#8f989f"><circle cx="1151.6" cy="256.8" r="1.1"/><circle cx="1156.6" cy="256.8" r="1.1"/><circle cx="1161.6" cy="256.8" r="1.1"/></g>
<g fill="#8f989f"><circle cx="1379.6" cy="256.8" r="1.1"/><circle cx="1384.6" cy="256.8" r="1.1"/><circle cx="1389.6" cy="256.8" r="1.1"/></g>
<g fill="#8f989f"><circle cx="1607.6" cy="256.8" r="1.1"/><circle cx="1612.6" cy="256.8" r="1.1"/><circle cx="1617.6" cy="256.8" r="1.1"/></g>
<g fill="#8f989f"><circle cx="1835.6" cy="256.8" r="1.1"/><circle cx="1840.6" cy="256.8" r="1.1"/><circle cx="1845.6" cy="256.8" r="1.1"/></g>
<g fill="#8f989f"><circle cx="1835.8" cy="404.6" r="1.1"/><circle cx="1840.8" cy="404.6" r="1.1"/><circle cx="1845.8" cy="404.6" r="1.1"/></g>
<path fill="none" stroke="#bcc1c5" stroke-width="1.4" d="M54.3 58.5 L57.5 61.6 L54.3 64.7"/>
</svg>
<svg width="1918" height="958" viewBox="0 0 1918 958" style="left:0;top:0;z-index:20"><path fill="none" stroke="#fff" stroke-width="2" stroke-linecap="round" stroke-linejoin="round" d="M45.6 926.3 A8 8 0 1 1 49.4 928 L42.8 929.6 Z"/></svg>
</div></body></html>
